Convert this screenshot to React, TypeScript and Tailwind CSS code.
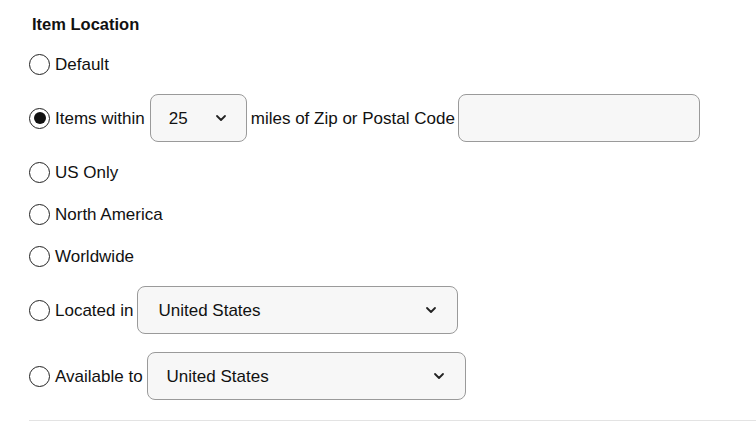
import React from "react";

function Radio({ checked }: { checked?: boolean }) {
  return (
    <span className="flex h-[21px] w-[21px] shrink-0 items-center justify-center rounded-full border-[1.5px] border-[#222] bg-white">
      {checked && <span className="h-[12px] w-[12px] rounded-full bg-[#111]" />}
    </span>
  );
}

function Chevron() {
  return (
    <svg width="12" height="8" viewBox="0 0 12 8" fill="none">
      <path d="M2 2l4 4 4-4" stroke="#222" strokeWidth="1.8" strokeLinecap="round" strokeLinejoin="round" />
    </svg>
  );
}

function Select({ value, className }: { value: string; className: string }) {
  return (
    <div className={`flex h-[48px] items-center justify-between rounded-[8px] border border-[#9a9a9a] bg-[#f7f7f7] ${className}`}>
      <span className="pt-[1px]">{value}</span>
      <Chevron />
    </div>
  );
}

function Row({ children, tall }: { children: React.ReactNode; tall?: boolean }) {
  return <div className={`flex items-center ${tall ? "h-[48px]" : "h-[24px]"}`}>{children}</div>;
}

export default function App() {
  return (
    <div className="min-h-[434px] bg-white pl-[29px] text-[17px] leading-[24px] text-[#111]" style={{ fontFamily: '"Liberation Sans", Arial, sans-serif' }}>
      <div className="pt-[12px] pl-[3px] text-[16.5px] font-bold">Item Location</div>
      <div className="mt-[16px] flex flex-col gap-[18px]">
        <Row>
          <Radio />
          <span className="ml-[5px] pt-[1px]">Default</span>
        </Row>
        <Row tall>
          <Radio checked />
          <span className="ml-[5px] pt-[1px]">Items within</span>
          <Select value="25" className="ml-[5px] w-[97px] pl-[18px] pr-[19px]" />
          <span className="ml-[4px] pt-[1px]">miles of Zip or Postal Code</span>
          <div className="ml-[3px] h-[48px] w-[242px] rounded-[8px] border border-[#9a9a9a] bg-[#f7f7f7]" />
        </Row>
        <Row>
          <Radio />
          <span className="ml-[5px] pt-[1px]">US Only</span>
        </Row>
        <Row>
          <Radio />
          <span className="ml-[5px] pt-[1px]">North America</span>
        </Row>
        <Row>
          <Radio />
          <span className="ml-[5px] pt-[1px]">Worldwide</span>
        </Row>
        <Row tall>
          <Radio />
          <span className="ml-[5px] pt-[1px]">Located in</span>
          <Select value="United States" className="ml-[4px] w-[321px] pl-[20px] pr-[20px]" />
        </Row>
        <Row tall>
          <Radio />
          <span className="ml-[5px] pt-[1px]">Available to</span>
          <Select value="United States" className="ml-[4px] w-[319px] pl-[19px] pr-[20px]" />
        </Row>
      </div>
      <div className="mt-[20px] h-px bg-[#e3e3e3]" />
    </div>
  );
}
